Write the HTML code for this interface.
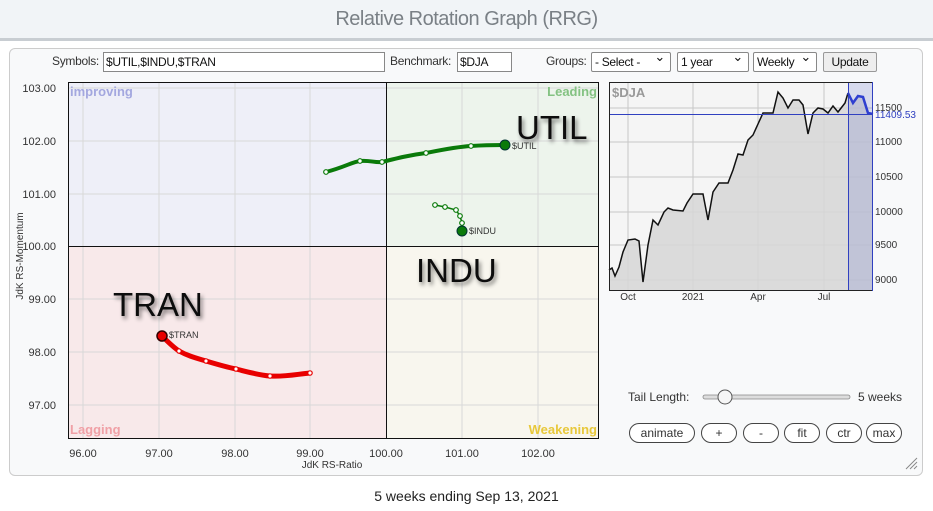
<!DOCTYPE html>
<html><head><meta charset="utf-8"><style>
body{margin:0;width:933px;height:511px;background:#fff;font-family:"Liberation Sans",sans-serif;overflow:hidden;position:relative}
.title{position:absolute;left:0;top:0;width:933px;height:38px;background:#f1f4f7;border-bottom:3px solid #c8cdd2;text-align:center;font-size:20px;line-height:38px;color:#7a8086;letter-spacing:-0.5px}
.panel{position:absolute;left:9px;top:48px;width:912px;height:426px;background:#f8f9fa;border:1px solid #ccc;border-radius:6px}
.lbl{position:absolute;font-size:12px;color:#333;top:54px;letter-spacing:-0.3px}
.inp{position:absolute;top:52px;height:18px;border:1px solid #888;background:#fff;font-size:12px;line-height:18px;padding-left:2px;color:#111;box-sizing:content-box;letter-spacing:-0.3px}
.sel{position:absolute;top:52px;height:18px;border:1px solid #888;border-radius:2px;background:#fff;font-size:12px;line-height:18px;padding-left:3px;color:#111;letter-spacing:-0.3px}
.sel.a:after{content:"⌄";position:absolute;right:5px;top:-5px;font-size:13px}
.btn{position:absolute;top:423px;height:18px;border:1px solid #444;border-radius:10px;background:#fff;font-size:12px;line-height:18px;text-align:center;color:#333}
.foot{position:absolute;left:0;top:488px;width:933px;text-align:center;font-size:14px;color:#222}
</style></head><body>
<div class="title">Relative Rotation Graph (RRG)</div>
<div class="panel"></div>
<div class="lbl" style="left:52px">Symbols:</div>
<div class="inp" style="left:103px;width:278px">$UTIL,$INDU,$TRAN</div>
<div class="lbl" style="left:390px">Benchmark:</div>
<div class="inp" style="left:457px;width:51px">$DJA</div>
<div class="lbl" style="left:546px">Groups:</div>
<div class="sel a" style="left:591px;width:75px">- Select -</div>
<div class="sel a" style="left:677px;width:67px">1 year</div>
<div class="sel a" style="left:753px;width:59px">Weekly</div>
<div class="sel" style="left:823px;width:52px;background:#eee;text-align:center;padding:0;border-color:#999">Update</div>
<svg style="position:absolute;left:0;top:0" width="933" height="511" font-family="Liberation Sans, sans-serif">
<defs><filter id="sh" x="-20%" y="-20%" width="140%" height="160%"><feGaussianBlur in="SourceAlpha" stdDeviation="2"/><feOffset dx="2" dy="3"/><feComponentTransfer><feFuncA type="linear" slope="0.5"/></feComponentTransfer><feMerge><feMergeNode/><feMergeNode in="SourceGraphic"/></feMerge></filter></defs>
<rect x="68" y="82" width="318" height="164" fill="#eeeff8"/>
<rect x="386" y="82" width="212" height="164" fill="#edf4ec"/>
<rect x="68" y="246" width="318" height="192" fill="#f8e9ea"/>
<rect x="386" y="246" width="212" height="192" fill="#f8f6ee"/>
<g stroke="#d8d8d8" stroke-width="1">
<line x1="83" y1="82" x2="83" y2="438"/><line x1="159" y1="82" x2="159" y2="438"/><line x1="235" y1="82" x2="235" y2="438"/><line x1="310" y1="82" x2="310" y2="438"/><line x1="462" y1="82" x2="462" y2="438"/><line x1="538" y1="82" x2="538" y2="438"/>
<line x1="68" y1="88" x2="598" y2="88"/><line x1="68" y1="141" x2="598" y2="141"/><line x1="68" y1="194" x2="598" y2="194"/><line x1="68" y1="299" x2="598" y2="299"/><line x1="68" y1="352" x2="598" y2="352"/><line x1="68" y1="405" x2="598" y2="405"/>
</g>
<rect x="68.5" y="82.5" width="530" height="356" fill="none" stroke="#111"/>
<line x1="386.5" y1="82" x2="386.5" y2="438" stroke="#111"/>
<line x1="68" y1="246.5" x2="598" y2="246.5" stroke="#111"/>
<g font-size="11" fill="#333" text-anchor="end">
<text x="56" y="92">103.00</text><text x="56" y="145">102.00</text><text x="56" y="198">101.00</text><text x="56" y="250">100.00</text><text x="56" y="303">99.00</text><text x="56" y="356">98.00</text><text x="56" y="409">97.00</text>
</g>
<g font-size="11" fill="#333" text-anchor="middle">
<text x="83" y="457">96.00</text><text x="159" y="457">97.00</text><text x="235" y="457">98.00</text><text x="310" y="457">99.00</text><text x="386" y="457">100.00</text><text x="462" y="457">101.00</text><text x="538" y="457">102.00</text>
<text x="332" y="468" font-size="10">JdK RS-Ratio</text>
<text transform="translate(23,256) rotate(-90)" font-size="10">JdK RS-Momentum</text>
</g>
<g font-size="13" font-weight="bold">
<text x="70" y="96" fill="#a3a7df">improving</text>
<text x="597" y="96" fill="#84c282" text-anchor="end">Leading</text>
<text x="70" y="434" fill="#f0a0a6">Lagging</text>
<text x="597" y="434" fill="#e8c83a" text-anchor="end">Weakening</text>
</g>
<g font-size="33" fill="#111" filter="url(#sh)">
<text x="516" y="139">UTIL</text>
<text x="416" y="282">INDU</text>
<text x="113" y="316">TRAN</text>
</g>
<path d="M326,172 C345,167 352,162 360,161 C370,160 375,163 382,162 C398,158 410,155 426,153 C441,150 455,147 471,146 C485,145 495,145 505,145" fill="none" stroke="#0a7a0a" stroke-width="4"/>
<g fill="#fff" stroke="#0a7a0a" stroke-width="1.2"><circle cx="326" cy="172" r="2.3"/><circle cx="360" cy="161" r="2.3"/><circle cx="382" cy="162" r="2.3"/><circle cx="426" cy="153" r="2.3"/><circle cx="471" cy="146" r="2.3"/></g>
<circle cx="505" cy="145" r="5" fill="#0a7a0a" stroke="#033" stroke-width="1"/>
<path d="M435,205 L445,207 L456,210 L460,216 L462,223 L462,231" fill="none" stroke="#0a7a0a" stroke-width="1.5"/>
<g fill="#fff" stroke="#0a7a0a" stroke-width="1.2"><circle cx="435" cy="205" r="2.3"/><circle cx="445" cy="207" r="2.3"/><circle cx="456" cy="210" r="2.3"/><circle cx="460" cy="216" r="2.3"/><circle cx="462" cy="223" r="2.3"/></g>
<circle cx="462" cy="231" r="5" fill="#0a7a0a" stroke="#033" stroke-width="1"/>
<path d="M162,336 C168,342 173,347 179,351 C188,356 196,358 206,361 C216,364 226,367 236,369 C248,372 258,375 270,376 C285,377 298,374 310,373" fill="none" stroke="#e80000" stroke-width="5"/>
<g fill="#fff" stroke="#e80000" stroke-width="1.2"><circle cx="179" cy="351" r="2.2"/><circle cx="206" cy="361" r="2.2"/><circle cx="236" cy="369" r="2.2"/><circle cx="270" cy="376" r="2.2"/><circle cx="310" cy="373" r="2.2"/></g>
<circle cx="162" cy="336" r="5" fill="#e80000" stroke="#300" stroke-width="1.5"/>
<g font-size="9" fill="#333"><text x="512" y="149">$UTIL</text><text x="469" y="234">$INDU</text><text x="169" y="338">$TRAN</text></g>
<!-- price chart -->
<rect x="609" y="82" width="264" height="209" fill="#f5f5f5"/>
<g stroke="#c8c8c8"><line x1="628" y1="82" x2="628" y2="291"/><line x1="693" y1="82" x2="693" y2="291"/><line x1="758" y1="82" x2="758" y2="291"/><line x1="824" y1="82" x2="824" y2="291"/>
<line x1="609" y1="108" x2="873" y2="108"/><line x1="609" y1="142" x2="873" y2="142"/><line x1="609" y1="177" x2="873" y2="177"/><line x1="609" y1="212" x2="873" y2="212"/><line x1="609" y1="245" x2="873" y2="245"/><line x1="609" y1="280" x2="873" y2="280"/></g>
<path d="M609,270 L612,268 L615,276 L619,267 L623,252 L628,240 L635,239 L639,241 L643,282 L648,245 L653,220 L658,225 L664,212 L668,208 L673,210 L683,211 L687,203 L693,194 L703,194 L708,220 L713,192 L719,183 L728,183 L733,170 L738,154 L743,155 L748,140 L753,135 L758,124 L763,113 L773,113 L778,92 L783,98 L788,108 L793,100 L799,100 L803,105 L808,134 L813,113 L818,108 L823,109 L828,113 L833,106 L838,112 L845,103 L848,93 L853,103 L858,96 L863,97 L868,113 L873,114 L873,291 L609,291Z" fill="#d6d6d6" fill-opacity="0.85"/>
<rect x="848" y="82" width="25" height="209" fill="#3040c0" fill-opacity="0.15"/>
<path d="M609,270 L612,268 L615,276 L619,267 L623,252 L628,240 L635,239 L639,241 L643,282 L648,245 L653,220 L658,225 L664,212 L668,208 L673,210 L683,211 L687,203 L693,194 L703,194 L708,220 L713,192 L719,183 L728,183 L733,170 L738,154 L743,155 L748,140 L753,135 L758,124 L763,113 L773,113 L778,92 L783,98 L788,108 L793,100 L799,100 L803,105 L808,134 L813,113 L818,108 L823,109 L828,113 L833,106 L838,112 L845,103 L848,93" fill="none" stroke="#111" stroke-width="1.5"/>
<path d="M848,93 L853,103 L858,96 L863,97 L868,113 L873,114" fill="none" stroke="#2f3fd0" stroke-width="2.5"/>
<line x1="609" y1="114.5" x2="873" y2="114.5" stroke="#3040c0"/>
<line x1="848.5" y1="82" x2="848.5" y2="291" stroke="#3040c0"/>
<rect x="609.5" y="82.5" width="263" height="208" fill="none" stroke="#222"/>
<line x1="872.5" y1="82" x2="872.5" y2="291" stroke="#3040c0"/>
<text x="612" y="97" font-size="13" font-weight="bold" fill="#999">$DJA</text>
<g font-size="10" fill="#333"><text x="875" y="111">11500</text><text x="875" y="145">11000</text><text x="875" y="180">10500</text><text x="875" y="215">10000</text><text x="875" y="248">9500</text><text x="875" y="283">9000</text></g>
<text x="875" y="118" font-size="10" fill="#3040c0">11409.53</text>
<g font-size="10" fill="#333" text-anchor="middle"><text x="628" y="300">Oct</text><text x="693" y="300">2021</text><text x="758" y="300">Apr</text><text x="824" y="300">Jul</text></g>
<!-- slider -->
<text x="628" y="401" font-size="12" fill="#333">Tail Length:</text>
<rect x="703" y="395" width="147" height="4" rx="2" fill="#ddd" stroke="#888" stroke-width="0.8"/>
<circle cx="725" cy="397" r="7" fill="#f6f6f6" stroke="#555"/>
<text x="858" y="401" font-size="12" fill="#333">5 weeks</text>
<g stroke="#888" stroke-width="1"><line x1="906" y1="469" x2="917" y2="458"/><line x1="910" y1="469" x2="917" y2="462"/><line x1="914" y1="469" x2="917" y2="466"/></g>
</svg>
<div class="btn" style="left:629px;width:64px">animate</div>
<div class="btn" style="left:701px;width:34px">+</div>
<div class="btn" style="left:743px;width:34px">-</div>
<div class="btn" style="left:784px;width:34px">fit</div>
<div class="btn" style="left:826px;width:34px">ctr</div>
<div class="btn" style="left:866px;width:34px">max</div>
<div class="foot">5 weeks ending Sep 13, 2021</div>
</body></html>
